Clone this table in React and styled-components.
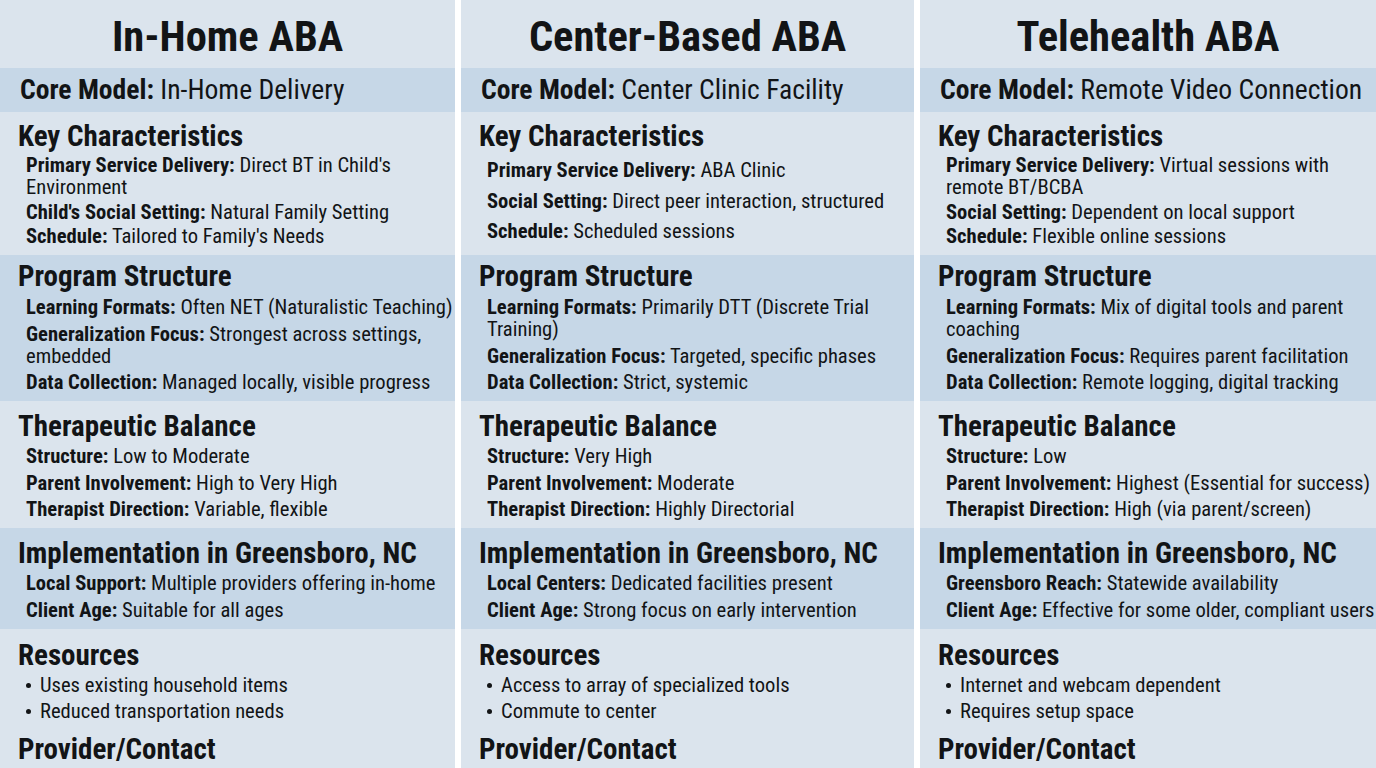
import styled, { createGlobalStyle } from 'styled-components';

const GlobalStyle = createGlobalStyle`
  * {
    box-sizing: border-box;
  }
  body {
    margin: 0;
    background: #ffffff;
    font-family: "Roboto Condensed", Roboto, "Liberation Sans", sans-serif;
    color: #121416;
  }
`;

const LIGHT = '#dbe4ed';
const DARK = '#c6d7e7';

const columns = [
  {
    title: 'In-Home ABA',
    core: 'In-Home Delivery',
    key: [
      ['Primary Service Delivery:', "Direct BT in Child's Environment"],
      ["Child's Social Setting:", 'Natural Family Setting'],
      ['Schedule:', "Tailored to Family's Needs"],
    ],
    program: [
      ['Learning Formats:', 'Often NET (Naturalistic Teaching)'],
      ['Generalization Focus:', 'Strongest across settings, embedded'],
      ['Data Collection:', 'Managed locally, visible progress'],
    ],
    balance: [
      ['Structure:', 'Low to Moderate'],
      ['Parent Involvement:', 'High to Very High'],
      ['Therapist Direction:', 'Variable, flexible'],
    ],
    local: [
      ['Local Support:', 'Multiple providers offering in-home'],
      ['Client Age:', 'Suitable for all ages'],
    ],
    resources: ['Uses existing household items', 'Reduced transportation needs'],
  },
  {
    title: 'Center-Based ABA',
    core: 'Center Clinic Facility',
    key: [
      ['Primary Service Delivery:', 'ABA Clinic'],
      ['Social Setting:', 'Direct peer interaction, structured'],
      ['Schedule:', 'Scheduled sessions'],
    ],
    program: [
      ['Learning Formats:', 'Primarily DTT (Discrete Trial Training)'],
      ['Generalization Focus:', 'Targeted, specific phases'],
      ['Data Collection:', 'Strict, systemic'],
    ],
    balance: [
      ['Structure:', 'Very High'],
      ['Parent Involvement:', 'Moderate'],
      ['Therapist Direction:', 'Highly Directorial'],
    ],
    local: [
      ['Local Centers:', 'Dedicated facilities present'],
      ['Client Age:', 'Strong focus on early intervention'],
    ],
    resources: ['Access to array of specialized tools', 'Commute to center'],
  },
  {
    title: 'Telehealth ABA',
    core: 'Remote Video Connection',
    key: [
      ['Primary Service Delivery:', 'Virtual sessions with remote BT/BCBA'],
      ['Social Setting:', 'Dependent on local support'],
      ['Schedule:', 'Flexible online sessions'],
    ],
    program: [
      ['Learning Formats:', 'Mix of digital tools and parent coaching'],
      ['Generalization Focus:', 'Requires parent facilitation'],
      ['Data Collection:', 'Remote logging, digital tracking'],
    ],
    balance: [
      ['Structure:', 'Low'],
      ['Parent Involvement:', 'Highest (Essential for success)'],
      ['Therapist Direction:', 'High (via parent/screen)'],
    ],
    local: [
      ['Greensboro Reach:', 'Statewide availability'],
      ['Client Age:', 'Effective for some older, compliant users'],
    ],
    resources: ['Internet and webcam dependent', 'Requires setup space'],
  },
];

// bands shared by every column, the rows line up across the board
const sections = [
  { id: 'key', heading: 'Key Characteristics', tone: LIGHT, top: 9, bottom: 5 },
  { id: 'program', heading: 'Program Structure', tone: DARK, top: 6, bottom: 3 },
  { id: 'balance', heading: 'Therapeutic Balance', tone: LIGHT, top: 10, bottom: 4 },
  { id: 'local', heading: 'Implementation in Greensboro, NC', tone: DARK, top: 10, bottom: 4 },
];

function App() {
  return (
    <>
      <GlobalStyle />
      <S.Board>
        {columns.map((col) => (
          <S.Column key={col.title}>
            <S.Title>{col.title}</S.Title>
            <S.Core>
              <strong>Core Model:</strong> {col.core}
            </S.Core>
            {sections.map((sec) => (
              <S.Band key={sec.id} $tone={sec.tone} $top={sec.top} $bottom={sec.bottom}>
                <S.Heading>{sec.heading}</S.Heading>
                <S.ItemList>
                  {col[sec.id].map(([label, text]) => (
                    <S.Item key={label}>
                      <strong>{label}</strong> {text}
                    </S.Item>
                  ))}
                </S.ItemList>
              </S.Band>
            ))}
            <S.Band $tone={LIGHT} $top={11} $bottom={0}>
              <S.Heading>Resources</S.Heading>
              <S.BulletList>
                {col.resources.map((r) => (
                  <S.Bullet key={r}>{r}</S.Bullet>
                ))}
              </S.BulletList>
              <S.Heading $spaced>Provider/Contact</S.Heading>
            </S.Band>
          </S.Column>
        ))}
      </S.Board>
    </>
  );
}
export default App;

const Board = styled.div`
  height: 768px;
  overflow: hidden;
  display: grid;
  grid-template-columns: 455px 453px 1fr;
  column-gap: 6px;
  background: #ffffff;
`;

const Column = styled.div`
  display: grid;
  grid-template-rows: 68px 44px 143px 146px 127px 101px 1fr;
  min-width: 0;
`;

const Title = styled.h1`
  margin: 0;
  padding-top: 6px;
  background: ${LIGHT};
  font-size: 42.5px;
  line-height: 62px;
  font-weight: 700;
  text-align: center;
  white-space: nowrap;
`;

const Core = styled.div`
  background: ${DARK};
  padding-left: 20px;
  font-size: 27.6px;
  line-height: 44px;
  white-space: nowrap;

  strong {
    font-weight: 700;
  }
`;

const Band = styled.section`
  display: flex;
  flex-direction: column;
  background: ${({ $tone }) => $tone};
  padding: ${({ $top }) => $top}px 0 ${({ $bottom }) => $bottom}px;
  min-height: 0;
`;

const Heading = styled.h2`
  margin: ${({ $spaced }) => ($spaced ? '12px' : '0')} 0 0;
  padding-left: 18px;
  font-size: 29px;
  line-height: 30px;
  font-weight: 700;
  white-space: nowrap;
`;

const ItemList = styled.div`
  flex: 1;
  display: flex;
  flex-direction: column;
  justify-content: space-evenly;
  padding-left: 26px;
  margin-right: -6px;
`;

const Item = styled.div`
  font-size: 20.6px;
  line-height: 22px;

  strong {
    font-weight: 700;
  }
`;

const BulletList = styled.ul`
  list-style: none;
  margin: 4px 0 0;
  padding: 0 0 0 26px;
  display: flex;
  flex-direction: column;
  gap: 4px;
`;

const Bullet = styled.li`
  display: flex;
  align-items: center;
  font-size: 20.6px;
  line-height: 22px;

  &::before {
    content: '';
    width: 5px;
    height: 5px;
    margin: 1px 9px 0 0;
    border-radius: 50%;
    background: #121416;
    flex: none;
  }
`;

const S = {
  Board,
  Column,
  Title,
  Core,
  Band,
  Heading,
  ItemList,
  Item,
  BulletList,
  Bullet,
};
